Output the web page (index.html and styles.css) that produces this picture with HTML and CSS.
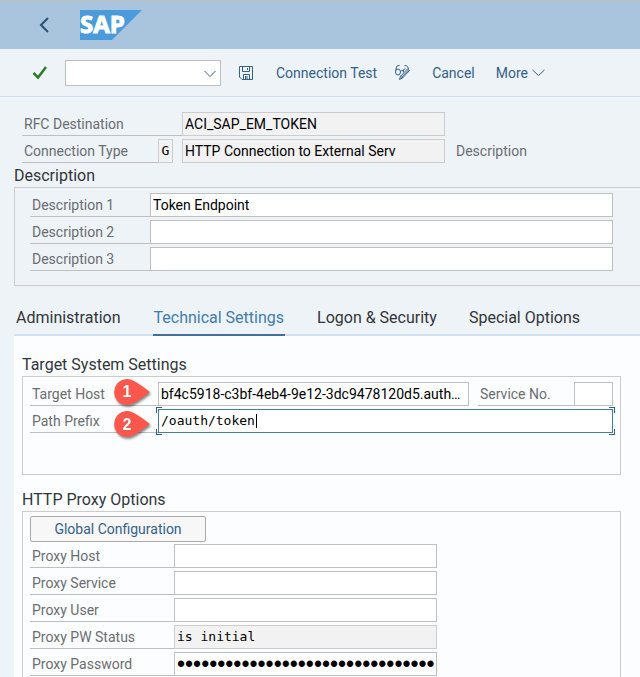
FILE: index.html
```html
<!DOCTYPE html>
<html lang="en">
<head>
<meta charset="utf-8">
<title>RFC Destination ACI_SAP_EM_TOKEN</title>
<link rel="stylesheet" href="styles.css">
</head>
<body>
<header class="shell">
  <button class="back" aria-label="Back"><svg width="12" height="18" viewBox="0 0 12 18"><path d="M10 2 3 9l7 7" fill="none" stroke="#27507a" stroke-width="2"/></svg></button>
  <svg class="logo" width="63" height="30" viewBox="0 0 63 30" role="img" aria-label="SAP">
    <path d="M0 0H62L32 30H0Z" fill="#4b9bdc"/>
    <text class="logo-text" x="0" y="23">SAP</text>
  </svg>
</header>
<nav class="toolbar" aria-label="Actions">
  <button class="tool accept" aria-label="Accept"><svg width="16" height="14" viewBox="0 0 16 14"><path d="M1.500 7 6 11.500 14 1" fill="none" stroke="#2b7c2b" stroke-width="2.500"/></svg></button>
  <div class="combo">
    <select aria-label="Command"><option></option></select>
    <svg class="combo-arrow" width="12" height="8" viewBox="0 0 12 8"><path d="m.5 1 5.500 5.500L11.500 1" fill="none" stroke="#346187"/></svg>
  </div>
  <button class="tool save" aria-label="Save"><svg width="16" height="16" viewBox="0 0 16 16" fill="none" stroke="#346187"><path d="M1.500 1.500h13v13H4L1.500 12ZM4.500 1.500v5h7v-5M5.500 14.500V9.500h6v5M7.500 11v3M9 11v3M9.500 3v2"/></svg></button>
  <button class="tool test">Connection Test</button>
  <button class="tool display" aria-label="Display and change"><svg width="17" height="17" viewBox="0 0 17 17" fill="none" stroke="#346187"><ellipse cx="4" cy="8" rx="2.500" ry="3"/><path d="M1.700 6.500 2.500 3Q3 1.300 5.500 1.500M6.400 7.500Q7.700 5.500 9.300 7M9.300 8.500Q8.500 4.700 11.500 4.700M14.500 5 13.500 2.500Q13 1.300 10.500 1.500M15.500 6.500 13.500 5 6.500 12.300 5.500 15.500 8.500 14ZM6.500 12.300 8.500 14M7.700 13.200 14.500 6"/></svg></button>
  <button class="tool cancel">Cancel</button>
  <button class="tool more">More <svg width="13" height="8" viewBox="0 0 13 8"><path d="m.5 1 6 5.500 6-5.500" fill="none" stroke="#346187"/></svg></button>
</nav>
<main>
  <section class="general">
    <div class="row">
      <label class="label label-general" for="dest">RFC Destination</label>
      <input class="field field-general readonly" id="dest" value="ACI_SAP_EM_TOKEN" readonly>
    </div>
    <div class="row">
      <label class="label label-type" for="type">Connection Type</label>
      <input class="field field-type mono readonly" id="type" value="G" readonly>
      <input class="field field-general readonly" aria-label="Connection type text" value="HTTP Connection to External Serv" readonly>
      <span class="note">Description</span>
    </div>
  </section>
  <section class="descriptions">
    <h2>Description</h2>
    <div class="group group-open">
      <div class="row"><label class="label label-desc" for="d1">Description 1</label><input class="field grow" id="d1" value="Token Endpoint"></div>
      <div class="row"><label class="label label-desc" for="d2">Description 2</label><input class="field grow" id="d2"></div>
      <div class="row"><label class="label label-desc" for="d3">Description 3</label><input class="field grow" id="d3"></div>
    </div>
  </section>
  <div class="tabs" role="tablist">
    <button class="tab" role="tab" aria-selected="false">Administration</button>
    <button class="tab active" role="tab" aria-selected="true">Technical Settings</button>
    <button class="tab" role="tab" aria-selected="false">Logon &amp; Security</button>
    <button class="tab" role="tab" aria-selected="false">Special Options</button>
  </div>
  <div class="panel" role="tabpanel">
    <section>
      <h2>Target System Settings</h2>
      <div class="group group-target">
        <div class="row">
          <label class="label label-target" for="host">Target Host</label>
          <input class="field grow host" id="host" value="bf4c5918-c3bf-4eb4-9e12-3dc9478120d5.auth…">
          <label class="label label-service" for="service">Service No.</label>
          <input class="field field-service" id="service">
          <svg class="pin" width="42" height="32" viewBox="0 0 42 32" aria-hidden="true"><path class="pin-shape" d="M38 15Q29 8 22 4A13 13 0 1 0 22 26Q29 22 38 15Z"/><text class="pin-text" x="15" y="20">1</text></svg>
        </div>
        <div class="row">
          <label class="label label-target" for="path">Path Prefix</label>
          <div class="focus grow"><input class="field mono" id="path" value="/oauth/token"><span class="caret"></span></div>
          <svg class="pin" width="42" height="32" viewBox="0 0 42 32" aria-hidden="true"><path class="pin-shape" d="M38 15Q29 8 22 4A13 13 0 1 0 22 26Q29 22 38 15Z"/><text class="pin-text" x="15" y="21">2</text></svg>
        </div>
      </div>
    </section>
    <section class="proxy">
      <h2>HTTP Proxy Options</h2>
      <div class="group group-proxy">
        <button class="push">Global Configuration</button>
        <div class="row"><label class="label label-proxy" for="ph">Proxy Host</label><input class="field field-proxy" id="ph"></div>
        <div class="row"><label class="label label-proxy" for="ps">Proxy Service</label><input class="field field-proxy" id="ps"></div>
        <div class="row"><label class="label label-proxy" for="pu">Proxy User</label><input class="field field-proxy" id="pu"></div>
        <div class="row"><label class="label label-proxy" for="pw">Proxy PW Status</label><input class="field field-proxy mono readonly" id="pw" value="is initial" readonly></div>
        <div class="row"><label class="label label-proxy" for="pp">Proxy Password</label><input class="field field-proxy password" id="pp" type="password" value="****************************************"></div>
      </div>
    </section>
  </div>
</main>
</body>
</html>
```
FILE: styles.css
```css
* { box-sizing: border-box; }

body {
  margin: 0;
  min-height: 100vh;
  display: flex;
  flex-direction: column;
  background: #eef3f8;
  color: #32363a;
  font: 14px/24px Roboto, "Liberation Sans", sans-serif;
}

button, input, select { font: inherit; color: inherit; }
button { padding: 0; border: 0; background: none; }
svg { display: block; flex: none; }
h2 { margin: 0; padding-top: 2px; font-size: 16px; line-height: 22px; font-weight: 400; }

.shell {
  display: flex;
  align-items: center;
  gap: 30px;
  height: 49px;
  padding-left: 38px;
  border-top: 1px solid #c0c0c0;
  background: #a9c5de;
}
.logo { overflow: visible; }
.logo-text {
  font: 700 24px "Open Sans", sans-serif;
  fill: #fff;
  stroke: #fff;
}

.toolbar {
  display: flex;
  align-items: center;
  height: 48px;
  padding-left: 32px;
  border-bottom: 1px solid #cfdcee;
  color: #346187;
}
.tool { display: flex; align-items: center; gap: 4px; white-space: nowrap; }
.combo { position: relative; width: 156px; margin: 0 17px; }
.combo select {
  display: block;
  width: 100%;
  height: 26px;
  border: 1px solid #bfbfbf;
  border-radius: 0;
  background: #fff;
  appearance: none;
}
.combo-arrow { position: absolute; right: 5px; top: 10px; pointer-events: none; }
.test { margin: 0 17px 0 22px; }
.cancel { margin: 0 21px; }

main { flex: 1; display: flex; flex-direction: column; padding-left: 14px; }

.row { display: flex; position: relative; }
.row + .row { margin-top: 3px; }
.label {
  flex: none;
  height: 24px;
  padding-left: 2px;
  border-bottom: 1px solid #bfbfbf;
  color: #6a6d70;
  white-space: nowrap;
}
.field {
  height: 24px;
  min-width: 0;
  padding: 0 2px;
  border: 1px solid #bfbfbf;
  border-radius: 0;
  outline: 0;
  background: #fff;
  color: #000;
}
.readonly { background: #f2f2f2; border-color: #ccc; }
.mono { font-family: "DejaVu Sans Mono", monospace; font-size: 13px; }
.password { font: 23px/22px "Liberation Sans", sans-serif; }
.grow { flex: 1; }

.general { padding: 15px 0 0 8px; }
.label-general { width: 160px; }
.label-type { width: 136px; }
.field-general { width: 263px; }
.field-type { width: 15px; margin-right: 9px; text-align: center; }
.note { margin-left: 11px; color: #6a6d70; }

.group { border: 1px solid #ccc; padding: 5px 7px; }
.group-open { height: 99px; border-right: 0; padding: 5px 27px 5px 15px; }
.label-desc { width: 120px; }

.tabs {
  display: flex;
  gap: 32px;
  height: 50px;
  padding-left: 2px;
  border-bottom: 2px solid #d1e0ee;
  font-size: 16px;
}
.tab { height: 50px; padding-top: 14px; line-height: 24px; white-space: nowrap; }
.tab.active { padding: 15px 1px 0; border-bottom: 2px solid #3f719f; color: #427cac; }

.panel {
  flex: 1;
  display: flex;
  flex-direction: column;
  gap: 12px;
  padding: 16px 19px 0 8px;
  background: #fcfdff;
}
.group-target { height: 99px; }
.label-target { width: 128px; }
.host { margin-right: 9px; }
.label-service { width: 96px; }
.field-service { width: 39px; }

.focus { position: relative; }
.focus .field { position: relative; display: block; width: 100%; border-color: #427cac; }
.focus::before {
  --c: linear-gradient(#346187, #346187);
  content: "";
  position: absolute;
  inset: -2px;
  background:
    var(--c) 0 0 / 6px 1px, var(--c) 0 0 / 1px 6px,
    var(--c) 100% 0 / 6px 1px, var(--c) 100% 0 / 1px 6px,
    var(--c) 0 100% / 6px 1px, var(--c) 0 100% / 1px 6px,
    var(--c) 100% 100% / 6px 1px, var(--c) 100% 100% / 1px 6px;
  background-repeat: no-repeat;
}
.caret { position: absolute; left: 98px; top: 5px; width: 1px; height: 14px; background: #000; }

.pin {
  position: absolute;
  left: 82px;
  top: -5px;
  overflow: visible;
  filter: drop-shadow(1px 2px 1px rgb(0 0 0 / 45%));
}
.row + .row .pin { top: 0; }
.pin-shape { fill: #fb574c; }
.pin-text { fill: #fff; font: 700 16px "Liberation Sans", sans-serif; text-anchor: middle; }

.proxy { flex: 1; display: flex; flex-direction: column; }
.group-proxy { flex: 1; border-bottom: 0; padding: 4px 7px 0; }
.push {
  display: block;
  width: 176px;
  height: 26px;
  margin-bottom: 2px;
  border: 1px solid #a9a9a9;
  border-radius: 2px;
  background: #f7f7f7;
  color: #346187;
}
.label-proxy { width: 144px; }
.field-proxy { width: 263px; }
```
